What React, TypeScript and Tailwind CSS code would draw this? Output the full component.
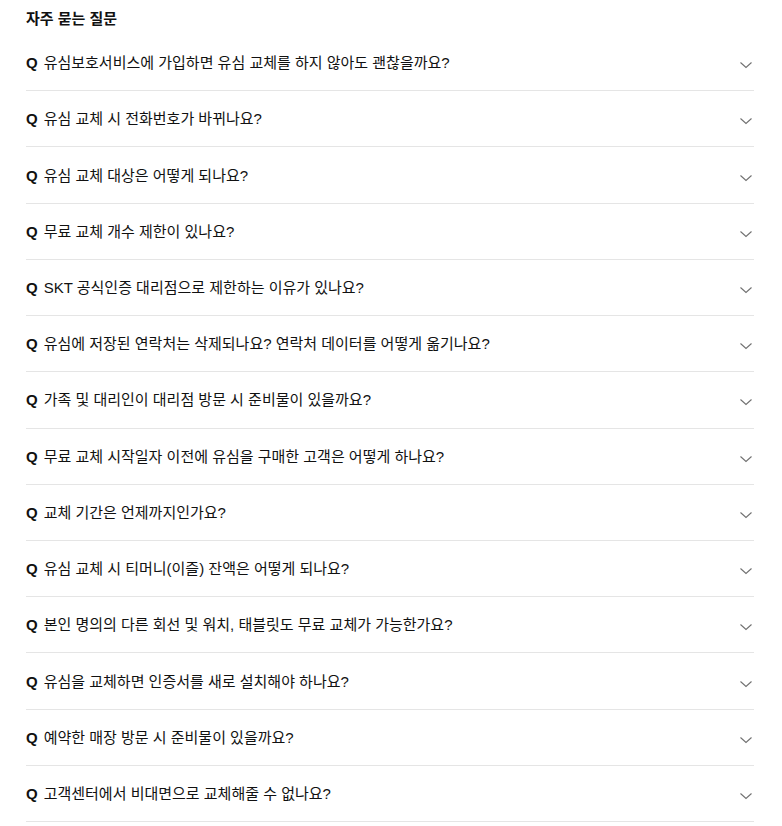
import React from "react";

const questions = [
  "유심보호서비스에 가입하면 유심 교체를 하지 않아도 괜찮을까요?",
  "유심 교체 시 전화번호가 바뀌나요?",
  "유심 교체 대상은 어떻게 되나요?",
  "무료 교체 개수 제한이 있나요?",
  "SKT 공식인증 대리점으로 제한하는 이유가 있나요?",
  "유심에 저장된 연락처는 삭제되나요? 연락처 데이터를 어떻게 옮기나요?",
  "가족 및 대리인이 대리점 방문 시 준비물이 있을까요?",
  "무료 교체 시작일자 이전에 유심을 구매한 고객은 어떻게 하나요?",
  "교체 기간은 언제까지인가요?",
  "유심 교체 시 티머니(이즐) 잔액은 어떻게 되나요?",
  "본인 명의의 다른 회선 및 워치, 태블릿도 무료 교체가 가능한가요?",
  "유심을 교체하면 인증서를 새로 설치해야 하나요?",
  "예약한 매장 방문 시 준비물이 있을까요?",
  "고객센터에서 비대면으로 교체해줄 수 없나요?",
];

function Chevron() {
  return (
    <svg width="14" height="8" viewBox="0 0 14 8" fill="none" className="shrink-0 mt-[5px]">
      <path d="M1.5 1.5L7 6.5L12.5 1.5" stroke="#707070" strokeWidth="1.1" />
    </svg>
  );
}

export default function App() {
  return (
    <div
      className="w-[782px] h-[826px] bg-white px-[26px] pt-[10px] text-[#111]"
      style={{ fontFamily: '"Liberation Sans", "Noto Sans CJK KR", sans-serif' }}
    >
      <h2 className="text-[15px] font-bold leading-[18px] h-[25px]">자주 묻는 질문</h2>
      <ul className="w-[728px]">
        {questions.map((q, i) => (
          <li
            key={i}
            className="flex items-center justify-between h-[56.23px] border-b border-[#e5e5e5] pr-[1px]"
          >
            <span className="text-[15px] leading-[20px] pt-[1px]">
              <span className="font-bold mr-[6px]">Q</span>
              {q}
            </span>
            <Chevron />
          </li>
        ))}
      </ul>
    </div>
  );
}
